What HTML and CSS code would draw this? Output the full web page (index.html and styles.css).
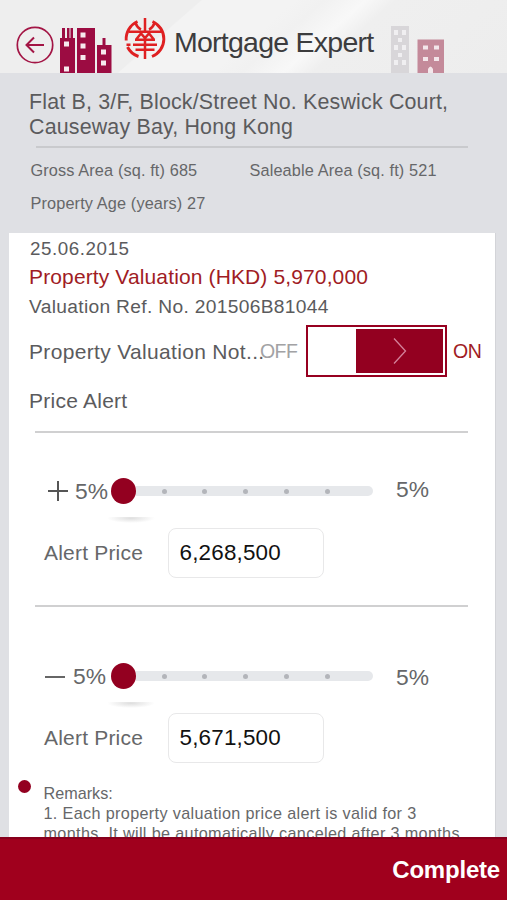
FILE: index.html
```html
<!DOCTYPE html>
<html lang="en">
<head>
<meta charset="utf-8">
<title>Mortgage Expert</title>
<link rel="stylesheet" href="styles.css">
</head>
<body>
<div class="app">
  <header class="header">
    <svg class="back" width="38" height="38" viewBox="0 0 38 38" fill="none" stroke="#a31545" stroke-width="1.7">
      <circle cx="19" cy="19" r="17.7"/>
      <path d="M28 19H11M18 11.5L10.5 19L18 26.5" stroke-width="2"/>
    </svg>
    <svg class="towers" width="52" height="45" viewBox="0 0 52 45">
      <path fill="#9c0c42" d="M0 45V10H2V0H5V10H7V0H9.500V10H10.500V0H13V10H15V45ZM17 45V0H35V45ZM37 45V17H42.500V10H45.500V17H51.500V45Z"/>
      <path fill="#f7e9ee" d="M4 13.500h5v5H4zM4 38.500h5v5H4zM20.500 4.500h5v5h-5zM20.500 15.500h5v5h-5zM20.500 27h5v5h-5zM41 21.500h5v5h-5zM41 32.500h5v5h-5z"/>
    </svg>
    <svg class="logo" width="42" height="42" viewBox="0 0 42 42" fill="none" stroke="#df2022" stroke-width="2.900">
      <path d="M13.500 3.500A19 19 0 0 0 2.200 22.500M28.500 3.500A19 19 0 0 1 28 38.500M3.500 29A19 19 0 0 0 14.500 38.500"/>
      <path d="M21 0V13.500M11.500 5Q13 9.500 17 11.500M30.500 5Q29 9.500 25 11.500M5 13.800H37M12.500 21L17 15.500L21 20L25 15.500L29.500 21M11 21.800H31M2.500 26.800H6.500M9 26.800H33M11.500 31.800H30.500M21 19V41" stroke-width="2.500"/>
    </svg>
    <h1 class="title">Mortgage Expert</h1>
    <svg class="houses" width="54" height="48" viewBox="0 0 54 48">
      <path fill="#d8d6d9" d="M0 1H18V48H0z"/>
      <path fill="#f0eff1" d="M3 5h4v5H3zM11 5h4v5h-4zM7 13h4v4H7zM3 20h4v5H3zM11 20h4v5h-4zM7 28h4v4H7zM3 35h4v5H3zM11 35h4v5h-4z"/>
      <path fill="#c48a9a" d="M26.500 14.500H53V48H26.500z"/>
      <path fill="#f3e6ea" d="M32 20.500h5v4h-5zM43 20.500h5v4h-5zM32 32h5v4h-5zM43 32h5v4h-5zM37 48V44q2.500-5 5 0v4z"/>
    </svg>
  </header>

  <section class="property">
    <p class="address">Flat B, 3/F, Block/Street No. Keswick Court,<br>Causeway Bay, Hong Kong</p>
    <hr class="thin">
    <div class="facts">
      <span class="gross">Gross Area (sq. ft) 685</span>
      <span class="saleable">Saleable Area (sq. ft) 521</span>
      <span class="age">Property Age (years) 27</span>
    </div>
  </section>

  <main class="card">
    <div class="date">25.06.2015</div>
    <div class="valuation">Property Valuation (HKD) 5,970,000</div>
    <div class="ref">Valuation Ref. No. 201506B81044</div>
    <div class="notify">
      <span class="notify-label">Property Valuation Not...</span>
      <span class="off">OFF</span>
      <span class="toggle"><span class="toggle-on">
        <svg width="14" height="28" viewBox="0 0 14 28" fill="none" stroke="#d4819a" stroke-width="1.300"><path d="M1 1.500L12.500 14L1 26.500"/></svg>
      </span></span>
      <span class="on">ON</span>
    </div>
    <div class="price-alert">Price Alert</div>
    <hr class="rule">

    <div class="slider-row">
      <svg class="sign plus" width="20" height="20" viewBox="0 0 20 20" stroke="#555" stroke-width="2"><path d="M0 10H20M10 0V20"/></svg>
      <span class="pct">5%</span>
      <div class="slider"><span class="knob"></span><div class="track"><i></i><i></i><i></i><i></i><i></i></div></div>
      <span class="pct end">5%</span>
    </div>
    <div class="shade"></div>
    <div class="alert-row"><span>Alert Price</span><div class="field">6,268,500</div></div>
    <hr class="rule">

    <div class="slider-row lower">
      <svg class="sign minus" width="20" height="20" viewBox="0 0 20 20" stroke="#666" stroke-width="2"><path d="M0 11H20"/></svg>
      <span class="pct">5%</span>
      <div class="slider"><span class="knob"></span><div class="track"><i></i><i></i><i></i><i></i><i></i></div></div>
      <span class="pct end">5%</span>
    </div>
    <div class="shade"></div>
    <div class="alert-row"><span>Alert Price</span><div class="field">5,671,500</div></div>

    <div class="remarks">
      <span class="bullet"></span>
      <p>Remarks:<br><span class="note">1. Each property valuation price alert is valid for 3<br>months. It will be automatically canceled after 3 months.</span></p>
    </div>
  </main>

  <footer class="footer">Complete</footer>
</div>
</body>
</html>
```

FILE: styles.css
```css
* { box-sizing: border-box; }
body {
  margin: 0;
  font-family: "Liberation Sans", Arial, sans-serif;
  color: #5b5b5d;
  background: #dfe0e4;
}
p, h1 { margin: 0; font-weight: 400; }
hr { border: 0; margin: 0; }
svg { display: block; flex: none; }
span, div { white-space: nowrap; }

.app {
  width: 507px;
  height: 900px;
  display: flex;
  flex-direction: column;
  overflow: hidden;
}

.header {
  height: 73px;
  flex: none;
  display: flex;
  align-items: flex-start;
  background: linear-gradient(139deg, #eee 0 34%, #f3f3f3 34.3% 50%, #f1f1f1 55%, #f8f8f8 62%, #efefef 67%, #ededed 100%);
}
.back { margin: 26px 0 0 16px; }
.towers { margin: 28px 0 0 6px; }
.logo { margin: 18px 0 0 12px; }
.title {
  width: 204px;
  margin: 22px 0 0 8px;
  font-size: 28.5px;
  line-height: 40px;
  letter-spacing: -0.75px;
  color: #3c3c3e;
}
.houses { margin: 25px 0 0 13px; }

.property { height: 160px; flex: none; padding-top: 17px; }
.address {
  margin-left: 29px;
  font-size: 21.4px;
  line-height: 25.2px;
  letter-spacing: 0.18px;
}
.thin { width: 432px; height: 2px; margin: 6px 0 0 36px; background: #c9cacd; }
.facts {
  display: grid;
  grid-template-columns: 219px 200px;
  grid-template-rows: 33px 33px;
  margin: 6px 0 0 30.5px;
  align-items: center;
  font-size: 16.3px;
  letter-spacing: 0.13px;
  color: #666769;
}

.card {
  flex: 1;
  min-height: 0;
  width: 487px;
  margin-left: 9px;
  background: #fff;
  border-right: 1px solid #d3d4d8;
  overflow: hidden;
}
.date {
  height: 29px;
  padding-left: 21px;
  font-size: 18.8px;
  line-height: 31px;
  letter-spacing: 0.55px;
}
.valuation {
  height: 30px;
  padding-left: 20px;
  font-size: 21px;
  line-height: 30px;
  letter-spacing: 0.13px;
  color: #a01c24;
}
.ref {
  height: 30px;
  padding-left: 20px;
  font-size: 19.2px;
  line-height: 29px;
  letter-spacing: 0.32px;
}
.notify {
  height: 58px;
  padding: 0 0 0 20px;
  display: flex;
  align-items: center;
}
.notify-label { width: 231px; font-size: 21px; letter-spacing: 0.33px; padding-top: 2px; }
.off { width: 46px; font-size: 19.5px; letter-spacing: -0.6px; color: #a2a2a4; }
.toggle {
  width: 141px;
  height: 52px;
  display: flex;
  justify-content: flex-end;
  padding: 2px;
  border: 2px solid #970020;
}
.toggle-on {
  width: 87px;
  display: flex;
  align-items: center;
  justify-content: center;
  background: #930020;
}
.on { margin-left: 6px; font-size: 19.5px; letter-spacing: -0.5px; color: #a01c24; }
.price-alert {
  height: 51px;
  padding-left: 20px;
  font-size: 21px;
  line-height: 41px;
  letter-spacing: 0.25px;
}
.rule { width: 433px; height: 2px; margin-left: 26px; background: #d0d0d1; }

.slider-row {
  height: 28px;
  margin-top: 44px;
  padding-left: 39px;
  display: flex;
  align-items: center;
}
.pct { width: 38px; margin-left: 7px; font-size: 22.8px; letter-spacing: 0; color: #666769; }
.plus + .pct { margin-left: 7px; }
.slider { width: 262px; flex: none; display: flex; align-items: center; margin-left: -2px; }
.knob {
  width: 25px;
  height: 26px;
  flex: none;
  border-radius: 50%;
  background: #930020;
}
.track {
  flex: 1;
  height: 10px;
  display: flex;
  align-items: center;
  gap: 35.800px;
  padding-left: 25.5px;
  border-radius: 0 5px 5px 0;
  background: #e6e8eb;
}
.track i { width: 5px; height: 5px; border-radius: 50%; background: #b3b5ba; }
.pct.end { width: 60px; margin: -3px 0 0 23px; }
.lower { margin-top: 55px; padding-left: 36px; }
.lower .pct { margin-left: 8px; }
.lower .slider { margin-left: 0; }
.lower .pct.end { margin: 3px 0 0 23px; }

.shade {
  width: 48px;
  height: 6px;
  margin: 12px 0 0 98px;
  background: radial-gradient(ellipse at 50% 20%, #dedede, #fff 70%);
}
.alert-row {
  height: 50px;
  margin-top: 5px;
  padding-left: 35px;
  display: flex;
  align-items: center;
  font-size: 21px;
  letter-spacing: 0.2px;
  color: #666769;
}
.alert-row span { width: 123.5px; }
.field {
  width: 156px;
  height: 50px;
  padding-left: 11px;
  border: 1px solid #e8e8e9;
  border-radius: 8px;
  font-size: 22.4px;
  line-height: 48px;
  color: #111;
}
.alert-row + .rule { margin-top: 27px; }

.remarks { display: flex; margin-top: 17px; padding-left: 9px; }
.bullet { width: 13px; height: 13px; border-radius: 50%; background: #930020; }
.remarks p {
  margin: 3px 0 0 12.5px;
  font-size: 16.2px;
  line-height: 20px;
  color: #666769;
}
.note { letter-spacing: 0.35px; }

.footer {
  height: 63px;
  flex: none;
  padding: 0 7px 0 0;
  border-top: 2px solid #87001d;
  background: #a0001d;
  color: #fff;
  font-size: 24px;
  font-weight: 700;
  line-height: 62px;
  letter-spacing: -0.2px;
  text-align: right;
}
```
